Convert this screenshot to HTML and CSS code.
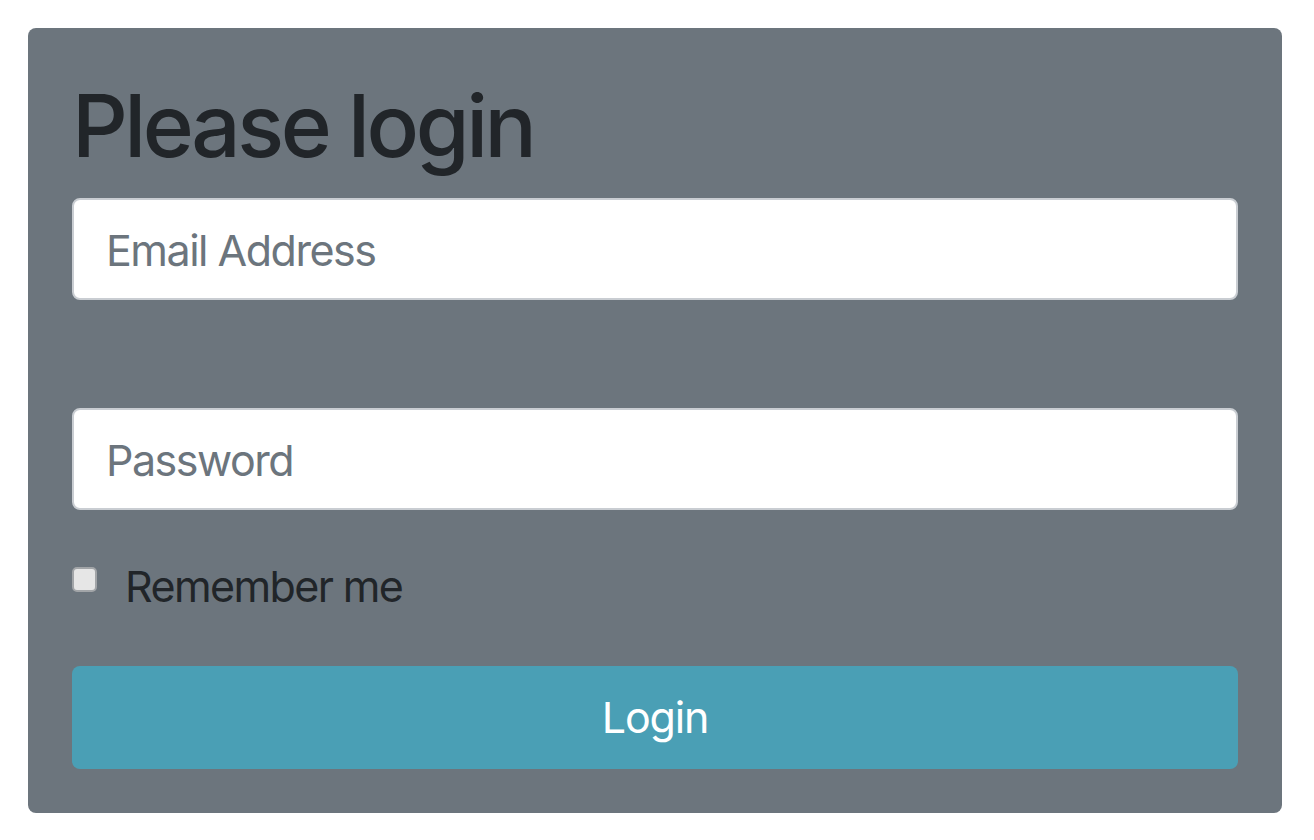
FILE: index.html
```html
<!DOCTYPE html>
<html lang="en">
<head>
<meta charset="utf-8">
<title>Please login</title>
<link rel="stylesheet" href="styles.css">
</head>
<body>
  <div class="card">
    <h1 class="title">Please login</h1>
    <form class="login-form">
      <div class="group group-email">
        <input class="field" type="email" placeholder="Email Address">
      </div>
      <div class="group group-password">
        <input class="field" type="password" placeholder="Password">
      </div>
      <label class="check-row">
        <input class="check" type="checkbox">
        <span class="check-label">Remember me</span>
      </label>
      <button class="btn-login" type="button">Login</button>
    </form>
  </div>
</body>
</html>
```

FILE: styles.css
```css
* { box-sizing: border-box; }

html, body {
  margin: 0;
  padding: 0;
  background: #ffffff;
  font-family: Inter, "Noto Sans", "Liberation Sans", sans-serif;
}

.card {
  margin: 28px 32px 0 28px;
  width: 1254px;
  height: 785px;
  background: #6c757d;
  border-radius: 8px;
  padding: 46px 44px 44px 44px;
  display: flex;
  flex-direction: column;
}

.title {
  margin: 0 0 20px 0;
  font-size: 87px;
  line-height: 1.2;
  font-weight: 500;
  color: #212529;
  letter-spacing: -3.45px;
}

.login-form {
  display: flex;
  flex-direction: column;
}

.group-email { margin-bottom: 108px; }

.field {
  display: block;
  width: 100%;
  height: 102px;
  border: 2px solid #c9cdd2;
  border-radius: 8px;
  background: #ffffff;
  padding: 2px 32px 0 32px;
  font-family: inherit;
  font-size: 43px;
  letter-spacing: -1.5px;
  color: #495057;
  outline: none;
}

.field::placeholder { color: #6c757d; opacity: 1; }

.check-row {
  margin-top: 51px;
  display: flex;
  align-items: flex-start;
  gap: 28px;
  cursor: pointer;
}

.check {
  appearance: none;
  -webkit-appearance: none;
  margin: 6px 0 0 0;
  width: 25px;
  height: 25px;
  border: 2px solid #a2a5a8;
  border-radius: 5px;
  background: #e6e6e6;
  flex: none;
}

.check-label {
  font-size: 43px;
  line-height: 1.2;
  letter-spacing: -1.6px;
  color: #212529;
}

.btn-login {
  margin-top: 53px;
  height: 103px;
  width: 100%;
  border: none;
  border-radius: 8px;
  background: #4a9fb5;
  color: #ffffff;
  font-family: inherit;
  font-size: 43px;
  letter-spacing: -1.2px;
  cursor: pointer;
}
```
